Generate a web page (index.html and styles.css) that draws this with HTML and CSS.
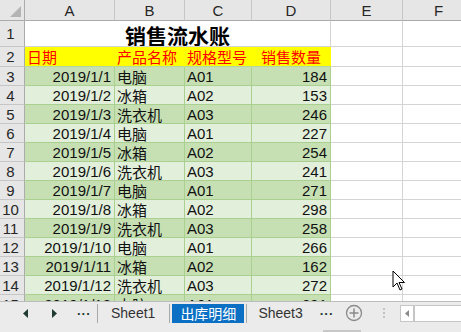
FILE: index.html
```html
<!DOCTYPE html>
<html>
<head>
<meta charset="utf-8">
<link rel="stylesheet" href="styles.css">
</head>
<body>
<div class="sheet">
  <div class="grid">
    <div class="corner"><span class="tri"></span></div>
    <div class="ch">A</div><div class="ch">B</div><div class="ch">C</div><div class="ch">D</div><div class="ch">E</div><div class="ch">F</div>

    <div class="rh">1</div><div class="title">销售流水账</div><div class="c"></div><div class="c"></div>

    <div class="rh">2</div><div class="hd">日期</div><div class="hd">产品名称</div><div class="hd">规格型号</div><div class="hd ctr">销售数量</div><div class="c"></div><div class="c"></div>

    <div class="rh">3</div><div class="d o r">2019/1/1</div><div class="d o">电脑</div><div class="d o">A01</div><div class="d o r">184</div><div class="c"></div><div class="c"></div>
    <div class="rh">4</div><div class="d e r">2019/1/2</div><div class="d e">冰箱</div><div class="d e">A02</div><div class="d e r">153</div><div class="c"></div><div class="c"></div>
    <div class="rh">5</div><div class="d o r">2019/1/3</div><div class="d o">洗衣机</div><div class="d o">A03</div><div class="d o r">246</div><div class="c"></div><div class="c"></div>
    <div class="rh">6</div><div class="d e r">2019/1/4</div><div class="d e">电脑</div><div class="d e">A01</div><div class="d e r">227</div><div class="c"></div><div class="c"></div>
    <div class="rh">7</div><div class="d o r">2019/1/5</div><div class="d o">冰箱</div><div class="d o">A02</div><div class="d o r">254</div><div class="c"></div><div class="c"></div>
    <div class="rh">8</div><div class="d e r">2019/1/6</div><div class="d e">洗衣机</div><div class="d e">A03</div><div class="d e r">241</div><div class="c"></div><div class="c"></div>
    <div class="rh">9</div><div class="d o r">2019/1/7</div><div class="d o">电脑</div><div class="d o">A01</div><div class="d o r">271</div><div class="c"></div><div class="c"></div>
    <div class="rh">10</div><div class="d e r">2019/1/8</div><div class="d e">冰箱</div><div class="d e">A02</div><div class="d e r">298</div><div class="c"></div><div class="c"></div>
    <div class="rh">11</div><div class="d o r">2019/1/9</div><div class="d o">洗衣机</div><div class="d o">A03</div><div class="d o r">258</div><div class="c"></div><div class="c"></div>
    <div class="rh">12</div><div class="d e r">2019/1/10</div><div class="d e">电脑</div><div class="d e">A01</div><div class="d e r">266</div><div class="c"></div><div class="c"></div>
    <div class="rh">13</div><div class="d o r">2019/1/11</div><div class="d o">冰箱</div><div class="d o">A02</div><div class="d o r">162</div><div class="c"></div><div class="c"></div>
    <div class="rh">14</div><div class="d e r">2019/1/12</div><div class="d e">洗衣机</div><div class="d e">A03</div><div class="d e r">272</div><div class="c"></div><div class="c"></div>
    <div class="rh">15</div><div class="d o r">2019/1/13</div><div class="d o">电脑</div><div class="d o">A01</div><div class="d o r">291</div><div class="c"></div><div class="c"></div>
  </div>

  <div class="tabs">
    <div class="nav">
      <svg class="arr" width="6" height="9" viewBox="0 0 6 9"><path d="M5 0 L0 4.5 L5 9 Z" fill="#1f3b33"/></svg>
      <svg class="arr" width="6" height="9" viewBox="0 0 6 9"><path d="M1 0 L6 4.5 L1 9 Z" fill="#1f3b33"/></svg>
      <span class="more">...</span>
    </div>
    <span class="sep"></span>
    <span class="tab t1">Sheet1</span>
    <span class="sep"></span>
    <span class="tab active">出库明细</span>
    <span class="sep"></span>
    <span class="tab t3">Sheet3</span>
    <span class="more more2">...</span>
    <svg class="plus" width="18" height="18" viewBox="0 0 18 18"><circle cx="9" cy="9" r="7.5" fill="none" stroke="#8a8a8a" stroke-width="1.3"/><path d="M9 4.5 V13.5 M4.5 9 H13.5" stroke="#8a8a8a" stroke-width="1.5"/></svg>
    <span class="vdots"><i></i><i></i><i></i></span>
    <div class="hscroll">
      <span class="lbtn"><svg width="4" height="7" viewBox="0 0 4 7"><path d="M4 0 L0 3.5 L4 7 Z" fill="#8a8a8a"/></svg></span>
    </div>
    <span class="thumb"></span>
  </div>

  <svg class="cursor" width="14" height="22" viewBox="0 0 14 22"><path d="M1 1 L1 17 L5 13 L8 20 L10 19 L7 12.5 L12.5 12.5 Z" fill="#fff" stroke="#000" stroke-width="1" stroke-linejoin="miter"/></svg>
</div>
</body>
</html>
```

FILE: styles.css
```css
* { box-sizing: border-box; margin: 0; padding: 0; }
html, body { width: 461px; height: 332px; overflow: hidden; background: #fff; }
body {
  font-family: "Liberation Sans", "Noto Sans CJK SC", sans-serif;
  color: #111;
}
.sheet { position: relative; width: 461px; height: 332px; display: flex; flex-direction: column; }

.grid {
  height: 301px;
  flex: none;
  overflow: hidden;
  display: grid;
  grid-template-columns: 25px 90px 70px 67px 79px 72px 72px;
  grid-template-rows: 21px 26px 20px;
  grid-auto-rows: 19px;
}
.grid > div {
  border-right: 1px solid #d4d4d4;
  border-bottom: 1px solid #d4d4d4;
  display: flex;
  align-items: center;
  font-size: 15px;
  white-space: nowrap;
  overflow: hidden;
}

.corner { background: #e6e6e6; position: relative; border-right-color: #ababab !important; border-bottom-color: #ababab !important; }
.tri {
  position: absolute; right: 3px; bottom: 3px;
  width: 0; height: 0;
  border-left: 11px solid transparent;
  border-bottom: 11px solid #b4b4b4;
}
.ch {
  background: #e6e6e6;
  justify-content: center;
  color: #262626;
  font-size: 15px;
  border-right-color: #c6c6c6 !important;
  border-bottom-color: #ababab !important;
}
.rh {
  background: #e6e6e6;
  color: #262626;
  justify-content: center;
  padding-right: 3px;
  border-right-color: #ababab !important;
  border-bottom-color: #c6c6c6 !important;
}
.title {
  grid-column: span 4;
  justify-content: center;
  font-family: "Noto Sans CJK SC", sans-serif;
  font-weight: bold;
  font-size: 21px !important;
  padding-top: 3px;
  color: #000;
}
.hd {
  background: #ffff00;
  color: #ff0000;
  font-family: "Noto Sans CJK SC", sans-serif;
  font-size: 15px !important;
  padding-left: 2px;
  border-right-color: #ffff00 !important;
  border-bottom-color: #b4d6a0 !important;
}
.hd.ctr { justify-content: center; padding-left: 0; }
.d {
  padding: 0 3px 0 2px;
  color: #111;
  border-right-color: #a9d08e !important;
  border-bottom-color: #a9d08e !important;
}
.d.o { background: #c6e0b4; }
.d.e { background: #e2efda; }
.d.r { justify-content: flex-end; }

/* tab bar */
.tabs {
  flex: 1;
  position: relative;
  background: #ebebeb;
  border-top: 1px solid #bcbcbc;
  display: flex;
  align-items: center;
  padding-left: 23px;
  padding-bottom: 8px;
  font-size: 14px;
  color: #333;
}
.nav { display: flex; align-items: center; width: 74px; }
.arr { margin-right: 22px; }
.arr + .arr { margin-right: 20px; }
.more { font-weight: bold; color: #1f3b33; font-size: 13px; letter-spacing: 1px; position: relative; top: -3px; }
.sep { width: 1px; height: 19px; background: #a8a8a8; }
.tab { height: 18px; line-height: 18px; }
.t1 { padding: 0 14px 0 13px; }
.t3 { padding: 0 0 0 11px; }
.tab.active {
  background: #0b6fc4;
  color: #fff;
  font-family: "Noto Sans CJK SC", sans-serif;
  margin: 0 2px;
  padding: 0 8px;
  height: 19px;
  line-height: 19px;
}
.more2 { margin-left: 17px; }
.plus { margin-left: 11px; }
.vdots { display: flex; flex-direction: column; gap: 2px; margin-left: 20px; }
.vdots i { display: block; width: 2px; height: 2px; background: #c2c2c2; }
.hscroll {
  margin-left: 15px;
  flex: 1;
  height: 17px;
  background: #fff;
  border: 1px solid #c6c6c6;
  border-right: none;
  display: flex;
}
.lbtn { width: 14px; border-right: 2px solid #c6c6c6; display: flex; align-items: center; justify-content: center; }
.thumb { position: absolute; left: 323px; bottom: 0; width: 38px; height: 2px; background: #c8c8c8; }

.cursor { position: absolute; left: 392px; top: 270px; }
```
